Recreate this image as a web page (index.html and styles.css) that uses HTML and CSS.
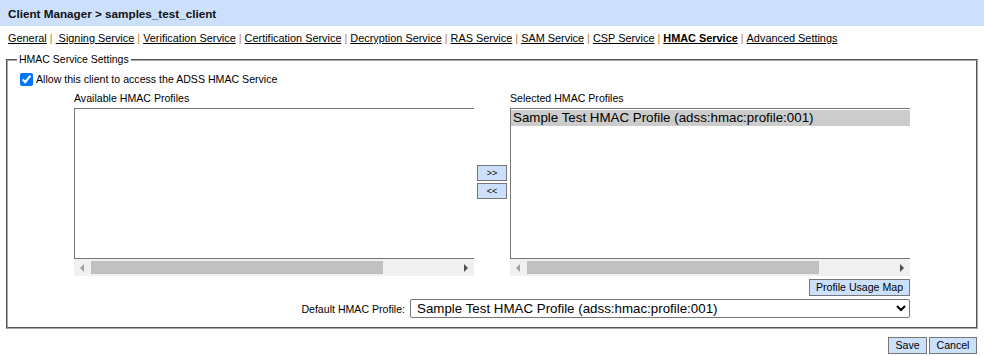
FILE: index.html
```html
<!DOCTYPE html>
<html>
<head>
<meta charset="utf-8">
<link rel="stylesheet" href="styles.css">
</head>
<body>
<div class="header">Client Manager &gt; samples_test_client</div>
<div class="tabs">
  <a href="#">General</a><span class="sep">|</span><a href="#">&nbsp;Signing Service</a><span class="sep">|</span><a href="#">Verification Service</a><span class="sep">|</span><a href="#">Certification Service</a><span class="sep">|</span><a href="#">Decryption Service</a><span class="sep">|</span><a href="#">RAS Service</a><span class="sep">|</span><a href="#">SAM Service</a><span class="sep">|</span><a href="#">CSP Service</a><span class="sep">|</span><a href="#" class="cur">HMAC Service</a><span class="sep">|</span><a href="#">Advanced Settings</a>
</div>
<fieldset class="panel">
  <legend>HMAC Service Settings</legend>
  <label class="allow"><input type="checkbox" checked><span>Allow this client to access the ADSS HMAC Service</span></label>
  <div class="inner">
    <div class="lists">
      <div class="col">
        <div class="cap">Available HMAC Profiles</div>
        <div class="list"></div>
        <div class="hscroll">
          <span class="arr left"></span>
          <span class="thumb"></span>
          <span class="arr right"></span>
        </div>
      </div>
      <div class="mover">
        <button class="btn mv">&gt;&gt;</button>
        <button class="btn mv">&lt;&lt;</button>
      </div>
      <div class="col">
        <div class="cap">Selected HMAC Profiles</div>
        <div class="list"><div class="opt sel">Sample Test HMAC Profile (adss:hmac:profile:001)</div></div>
        <div class="hscroll">
          <span class="arr left"></span>
          <span class="thumb"></span>
          <span class="arr right"></span>
        </div>
      </div>
    </div>
    <div class="usage"><button class="btn">Profile Usage Map</button></div>
    <div class="default">
      <label for="def">Default HMAC Profile:</label>
      <select id="def" class="sel-box"><option>Sample Test HMAC Profile (adss:hmac:profile:001)</option></select>
    </div>
  </div>
</fieldset>
<div class="actions">
  <button class="btn save">Save</button><button class="btn cancel">Cancel</button>
</div>
</body>
</html>
```
FILE: styles.css
```css
body {
  margin: 0;
  font-family: "Liberation Sans", Arial, sans-serif;
  font-size: 10.6px;
  color: #000;
  background: #fff;
}
.header {
  height: 26px;
  background: #cce0fc;
  padding-left: 8px;
  font-weight: bold;
  font-size: 11.7px;
  line-height: 27px;
  color: #111;
}
.tabs {
  padding: 0 8px;
  height: 24px;
  line-height: 24px;
  font-size: 10.9px;
  white-space: nowrap;
}
.tabs a {
  color: #000;
  text-decoration: underline;
}
.tabs a.cur {
  font-weight: bold;
}
.sep {
  color: #c87a2a;
  margin: 0 3px;
}
.panel {
  margin: 3px 6px 0;
  padding: 0 0 9px 0;
  border: 2px groove #a8a8a8;
  min-width: 0;
}
.panel legend {
  margin-left: 9px;
  padding: 0 2px;
  line-height: 13px;
  font-size: 10.5px;
}
.allow {
  display: flex;
  align-items: center;
  gap: 3px;
  margin: 6px 0 0 12px;
  height: 14px;
}
.allow input {
  margin: 0;
  width: 13px;
  height: 13px;
}
.inner {
  width: 836px;
  margin-left: 66px;
}
.lists {
  display: flex;
  margin-top: 6px;
}
.col {
  width: 400px;
}
.cap {
  line-height: 13px;
  margin-bottom: 3px;
}
.list {
  height: 148px;
  border: 1px solid #767676;
  border-right: none;
  padding-top: 1px;
  box-sizing: content-box;
  font-family: "Liberation Sans", Arial, sans-serif;
  font-size: 13.33px;
}
.opt {
  height: 16px;
  line-height: 16px;
  padding-left: 2px;
}
.opt.sel {
  background: #cccccc;
}
.hscroll {
  height: 17px;
  background: #f0f0f0;
  position: relative;
}
.thumb {
  position: absolute;
  left: 17px;
  width: 292px;
  top: 2px;
  height: 13px;
  background: #c1c1c1;
}
.arr {
  position: absolute;
  top: 5px;
  width: 0;
  height: 0;
  border-top: 4px solid transparent;
  border-bottom: 4px solid transparent;
}
.arr.left {
  left: 6px;
  border-right: 4px solid #a3a3a3;
}
.arr.right {
  right: 6px;
  border-left: 4px solid #505050;
}
.mover {
  width: 36px;
  display: flex;
  flex-direction: column;
  align-items: center;
  padding-top: 73px;
  gap: 2px;
}
.btn {
  font-family: "Liberation Sans", Arial, sans-serif;
  font-size: 10.6px;
  background: #cce0fc;
  border: 1px solid #767676;
  border-radius: 0;
  color: #000;
  padding: 0 8px;
  height: 17px;
  line-height: 15px;
  margin: 0;
}
.btn.mv {
  width: 30px;
  height: 16px;
  padding: 0;
  font-size: 9px;
}
.usage {
  display: flex;
  justify-content: flex-end;
  margin-top: 3px;
}
.usage .btn {
  width: 101px;
  padding: 0;
}
.default {
  display: flex;
  justify-content: flex-end;
  align-items: center;
  gap: 5px;
  margin-top: 3px;
}
.sel-box {
  width: 500px;
  height: 19px;
  font-family: "Liberation Sans", Arial, sans-serif;
  font-size: 13.33px;
  border: 1px solid #767676;
  border-radius: 2px;
  background: #fff;
  padding: 0 2px;
  margin: 0;
}
.actions {
  display: flex;
  justify-content: flex-end;
  gap: 2px;
  margin-top: 8px;
  padding-right: 7px;
}
.btn.save {
  width: 39px;
  padding: 0;
}
.btn.cancel {
  width: 48px;
  padding: 0;
}
```
